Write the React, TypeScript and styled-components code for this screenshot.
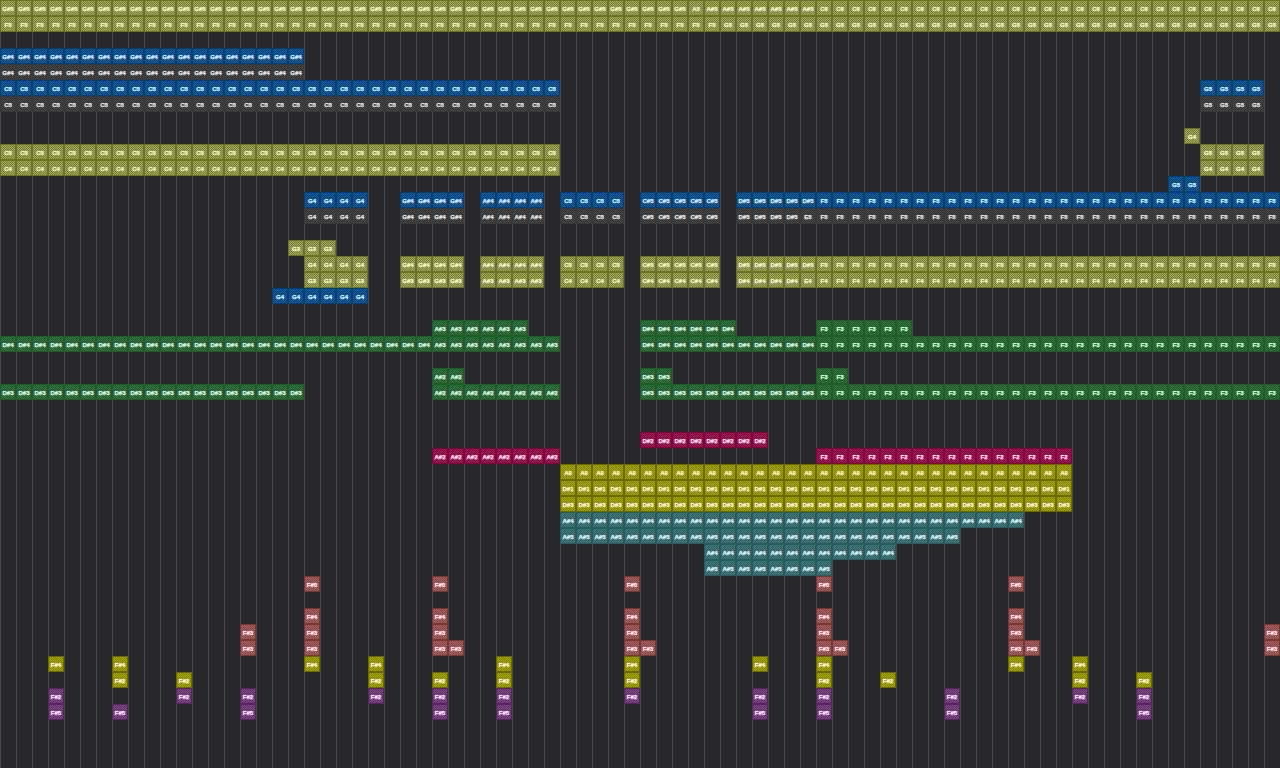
import React from "react";
import styled, { createGlobalStyle } from "styled-components";

type Tone = "olive" | "blue" | "gray" | "green" | "red" | "yellow" | "teal" | "rose" | "purple";

const palette: Record<Tone, { edge: string; a: string; b: string; ink: string }> = {
  olive: { edge: "#6b7032", a: "#7b8035", b: "#a3a853", ink: "#f6f8e4" },
  blue: { edge: "#0f3d68", a: "#0a4680", b: "#0e5ca2", ink: "#e8f0f4" },
  gray: { edge: "#393939", a: "#303030", b: "#4a4a4a", ink: "#e8f0e8" },
  green: { edge: "#275829", a: "#1f582b", b: "#2f7a40", ink: "#eef6ee" },
  red: { edge: "#760a3a", a: "#860a42", b: "#a8145a", ink: "#faeef2" },
  yellow: { edge: "#6b6900", a: "#848200", b: "#aaa810", ink: "#fcfce6" },
  teal: { edge: "#2d5a5c", a: "#2b5f61", b: "#3f7f81", ink: "#ecf6f6" },
  rose: { edge: "#753839", a: "#8a4244", b: "#ab6062", ink: "#fcf4f4" },
  purple: { edge: "#54275a", a: "#642e6a", b: "#83468c", ink: "#faf0fa" },
};

type Run = [tone: Tone, label: string, from: number, to?: number];

const lanes: Record<number, Run[]> = {
  0: [["olive", "G#5", 0, 42], ["olive", "A5", 43], ["olive", "A#5", 44, 50], ["olive", "C6", 51, 79]],
  1: [["olive", "F5", 0, 44], ["olive", "G5", 45, 79]],
  3: [["blue", "G#4", 0, 18]],
  4: [["gray", "G#4", 0, 18]],
  5: [["blue", "C5", 0, 34], ["blue", "G5", 75, 78]],
  6: [["gray", "C5", 0, 34], ["gray", "G5", 75, 78]],
  8: [["olive", "G4", 74]],
  9: [["olive", "C5", 0, 34], ["olive", "G5", 75, 78]],
  10: [["olive", "C4", 0, 34], ["olive", "G4", 75, 78]],
  11: [["blue", "G5", 73, 74]],
  12: [["blue", "G4", 19, 22], ["blue", "G#4", 25, 28], ["blue", "A#4", 30, 33], ["blue", "C5", 35, 38], ["blue", "C#5", 40, 44], ["blue", "D#5", 46, 50], ["blue", "F5", 51, 79]],
  13: [["gray", "G4", 19, 22], ["gray", "G#4", 25, 28], ["gray", "A#4", 30, 33], ["gray", "C5", 35, 38], ["gray", "C#5", 40, 44], ["gray", "D#5", 46, 49], ["gray", "E5", 50], ["gray", "F5", 51, 79]],
  15: [["olive", "G3", 18, 20]],
  16: [["olive", "G4", 19, 22], ["olive", "G#4", 25, 28], ["olive", "A#4", 30, 33], ["olive", "C5", 35, 38], ["olive", "C#5", 40, 44], ["olive", "D#5", 46, 50], ["olive", "F5", 51, 79]],
  17: [["olive", "G3", 19, 22], ["olive", "G#3", 25, 28], ["olive", "A#3", 30, 33], ["olive", "C4", 35, 38], ["olive", "C#4", 40, 44], ["olive", "D#4", 46, 49], ["olive", "E4", 50], ["olive", "F4", 51, 79]],
  18: [["blue", "G4", 17, 22]],
  20: [["green", "A#3", 27, 32], ["green", "D#4", 40, 45], ["green", "F3", 51, 56]],
  21: [["green", "D#4", 0, 26], ["green", "A#3", 27, 34], ["green", "D#4", 40, 50], ["green", "F3", 51, 79]],
  23: [["green", "A#2", 27, 28], ["green", "D#3", 40, 41], ["green", "F3", 51, 52]],
  24: [["green", "D#3", 0, 18], ["green", "A#2", 27, 34], ["green", "D#3", 40, 50], ["green", "F3", 51, 79]],
  27: [["red", "D#2", 40, 47]],
  28: [["red", "A#2", 27, 34], ["red", "F2", 51, 66]],
  29: [["yellow", "A0", 35, 66]],
  30: [["yellow", "D#1", 35, 66]],
  31: [["yellow", "D#3", 35, 66]],
  32: [["teal", "A#4", 35, 63]],
  33: [["teal", "A#5", 35, 59]],
  34: [["teal", "A#4", 44, 55]],
  35: [["teal", "A#5", 44, 51]],
};

const hits = (tone: Tone, label: string, cols: number[]): Run[] => cols.map((c) => [tone, label, c] as Run);

lanes[36] = hits("rose", "F#5", [19, 27, 39, 51, 63]);
lanes[38] = hits("rose", "F#4", [19, 27, 39, 51, 63]);
lanes[39] = hits("rose", "F#3", [15, 19, 27, 39, 51, 63, 79]);
lanes[40] = hits("rose", "F#3", [15, 19, 27, 28, 39, 40, 51, 52, 63, 64, 79]);
lanes[41] = hits("yellow", "F#4", [3, 7, 19, 23, 31, 39, 47, 51, 63, 67]);
lanes[42] = hits("yellow", "F#2", [7, 11, 23, 27, 31, 39, 51, 55, 67, 71]);
lanes[43] = hits("purple", "F#2", [3, 11, 15, 23, 27, 31, 39, 47, 51, 59, 67, 71]);
lanes[44] = hits("purple", "F#5", [3, 7, 15, 27, 31, 47, 51, 59, 71]);

const Global = createGlobalStyle`
  html, body { margin: 0; padding: 0; background: #28282a; }
  #root { width: 1280px; height: 768px; overflow: hidden; }
`;

const Roll = styled.main`
  width: 1280px;
  height: 768px;
  overflow: hidden;
  display: grid;
  grid-template-rows: repeat(48, 16px);
  background-color: #28282a;
  background-image: linear-gradient(90deg, #4a4a4c 1px, transparent 1px);
  background-size: 16px 16px;
`;

const Lane = styled.div`
  display: grid;
  grid-template-columns: repeat(80, 16px);
  grid-template-rows: 16px;
`;

const Note = styled.div<{ $tone: Tone }>`
  box-sizing: border-box;
  width: 16px;
  height: 16px;
  padding-top: 1px;
  display: flex;
  align-items: center;
  justify-content: center;
  border: 1px solid ${(p) => palette[p.$tone].edge};
  background-color: ${(p) => palette[p.$tone].a};
  background-image: conic-gradient(
    ${(p) => palette[p.$tone].b} 25%,
    ${(p) => palette[p.$tone].a} 0 50%,
    ${(p) => palette[p.$tone].b} 0 75%,
    ${(p) => palette[p.$tone].a} 0
  );
  background-size: 2px 2px;
  color: ${(p) => palette[p.$tone].ink};
  font-family: "Liberation Sans", Arial, sans-serif;
  font-size: 6px;
  font-weight: 700;
  -webkit-text-stroke: 0.25px ${(p) => palette[p.$tone].ink};
  line-height: 1;
  white-space: nowrap;
`;

const laneKeys = Array.from({ length: 48 }, (_, i) => i);

export default function App() {
  return (
    <>
      <Global />
      <Roll>
        {laneKeys.map((row) => (
          <Lane key={row}>
            {(lanes[row] ?? []).flatMap(([tone, label, from, to]) =>
              Array.from({ length: (to ?? from) - from + 1 }, (_, k) => (
                <Note key={from + k} $tone={tone} style={{ gridColumnStart: from + k + 1 }}>
                  {label}
                </Note>
              ))
            )}
          </Lane>
        ))}
      </Roll>
    </>
  );
}
